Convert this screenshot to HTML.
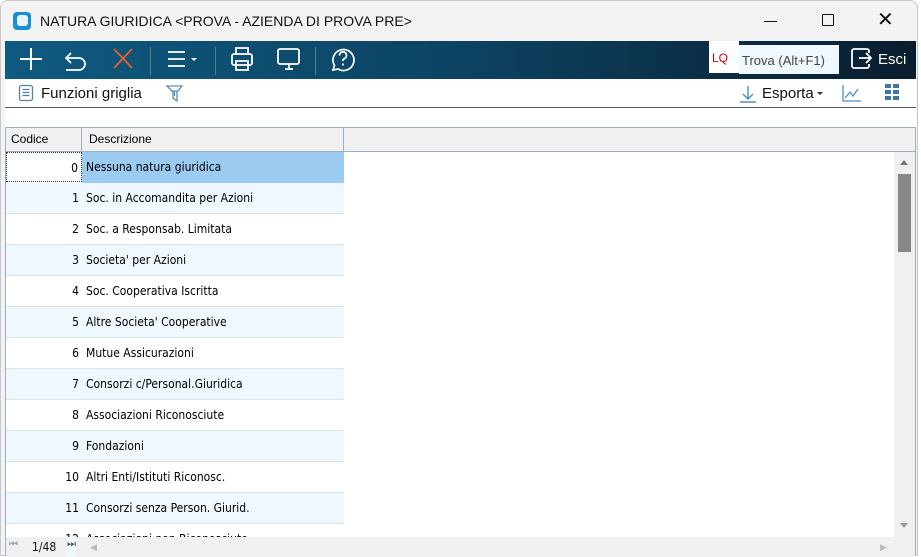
<!DOCTYPE html>
<html><head><meta charset="utf-8"><style>
*{box-sizing:border-box;margin:0;padding:0}
body{width:921px;height:556px;overflow:hidden;background:#fff;font-family:"Liberation Sans",sans-serif;position:relative}
.abs{position:absolute}
.win{left:0;top:0;width:918px;height:556px;border:1px solid #c8c8c8;border-radius:8px 8px 0 0;background:#f3f3f3;overflow:hidden}
.tb{left:5px;top:41px;width:911px;height:38px;background:linear-gradient(90deg,#0f5a80 0%,#0c4363 50%,#0a1d2e 100%)}
.sep{top:47px;width:1px;height:28px;background:#4f7f99}
.t2{left:5px;top:79px;width:911px;height:29px;background:#fff;border-bottom:1px solid #555}
.grid{left:5px;top:127px;width:911px;height:429px;background:#fff;border:1px solid #9bb0c4;border-bottom:none}
.hdr{left:0;top:0;width:909px;height:24px;background:#f1f1f1;border-bottom:1px solid #9bb0c4;font-size:12px}
.row{position:absolute;left:0;width:338px;height:31px;border-bottom:1px solid #d8e4ef;font-size:12px;font-family:"DejaVu Sans Condensed","Liberation Sans",sans-serif}
.row .c{position:absolute;left:0;width:76px;height:30px;text-align:right;padding-right:3px;line-height:30px}
.row .d{position:absolute;left:76px;width:262px;height:30px;padding-left:4px;line-height:30px}
</style></head><body>
<div class="abs win">
 <div class="abs" style="left:12px;top:11px;width:18px;height:18px;border-radius:4px;background:#1a8fd6"></div>
 <div class="abs" style="left:16px;top:14px;width:11px;height:11px;border-radius:3px;background:#e8f4ff"></div>
 <div class="abs" style="left:39px;top:12px;font-size:14px;color:#111">NATURA GIURIDICA &lt;PROVA - AZIENDA DI PROVA PRE&gt;</div>
 <div class="abs" style="left:763px;top:20px;width:13px;height:1px;background:#111"></div>
 <div class="abs" style="left:821px;top:13px;width:12px;height:12px;border:1px solid #111;border-radius:1px"></div>
 <div class="abs" style="left:876px;top:6px;font-size:20px;color:#111">✕</div>
</div>
<div class="abs tb">
 <svg class="abs" style="left:0;top:0" width="360" height="38" fill="none" stroke-width="2">
  <path d="M26 7v22M15 18h22" stroke="#fff"/>
  <path d="M66 12l-5 5 5 5M61 17h13a6 6 0 0 1 0 12h-13" stroke="#fff" stroke-width="1.7"/>
  <path d="M109 8l18 19M127 8l-18 19" stroke="#e0622e" stroke-width="1.8"/>
  <path d="M163 11h17M163 18h17M163 25h17" stroke="#fff" stroke-width="1.7"/>
  <path d="M186 17h6l-3 3z" fill="#fff" stroke="none"/>
  <rect x="227" y="13" width="20" height="11" rx="2" stroke="#fff" stroke-width="1.8"/>
  <path d="M231 13V7h12v6M231 20h12v9h-12z" stroke="#fff" stroke-width="1.8"/>
  <rect x="273" y="8" width="21" height="15" rx="2" stroke="#fff" stroke-width="1.8"/>
  <path d="M280 28h8M284 23v5" stroke="#fff" stroke-width="1.8"/>
  <path d="M328 29l1.5-4.5A10.5 10.5 0 1 1 333 28z" stroke="#fff" stroke-width="1.7"/>
  <path d="M334.5 14.5a3.5 3.5 0 1 1 5 3c-1.2.6-1.5 1.3-1.5 2.5" stroke="#fff" stroke-width="1.8"/>
  <circle cx="338" cy="23.5" r="1.1" fill="#fff" stroke="none"/>
 </svg>
 <div class="abs sep" style="left:145px;top:6px"></div>
 <div class="abs sep" style="left:210px;top:6px"></div>
 <div class="abs sep" style="left:310px;top:6px"></div>
 <div class="abs" style="left:704px;top:0;width:30px;height:32px;background:#fff;color:#c00;font-size:12px;padding:10px 0 0 3px">LQ</div>
 <div class="abs" style="left:734px;top:4px;width:100px;height:29px;background:#f0f8ff;color:#444;font-size:13px;padding:8px 0 0 3px">Trova (Alt+F1)</div>
 <svg class="abs" style="left:845px;top:6px" width="26" height="24" fill="none" stroke="#fff" stroke-width="1.8"><path d="M9 2H4a2 2 0 0 0-2 2v15a2 2 0 0 0 2 2h5M9 11h12M16 6l5 5-5 5"/><path d="M9 2h8a2 2 0 0 1 2 2v2M9 21h8a2 2 0 0 0 2-2v-2"/></svg>
 <div class="abs" style="left:873px;top:10px;color:#fff;font-size:15px">Esci</div>
</div>
<div class="abs t2">
 <svg class="abs" style="left:13px;top:5px" width="18" height="18" fill="none" stroke="#5a7fa8" stroke-width="1.3"><rect x="1.5" y="1.5" width="13" height="15" rx="2"/><path d="M4.5 5.5h7M4.5 8.5h7M4.5 11.5h7"/></svg>
 <div class="abs" style="left:36px;top:6px;font-size:15px;color:#111">Funzioni griglia</div>
 <svg class="abs" style="left:160px;top:4px" width="20" height="20" fill="none" stroke="#5a8fb0" stroke-width="1.3"><path d="M2 3h15l-5 6v9l-4-3V9z"/><path d="M7 8h5M9.5 8v5"/></svg>
 <svg class="abs" style="left:733px;top:5px" width="20" height="20" fill="none" stroke="#4a8fc8" stroke-width="1.4"><path d="M10 2v13M5 10l5 5 5-5M2 18h16"/></svg>
 <div class="abs" style="left:757px;top:6px;font-size:15px;color:#111">Esporta</div>
 <div class="abs" style="left:812px;top:13px;border-left:3px solid transparent;border-right:3px solid transparent;border-top:3px solid #333"></div>
 <svg class="abs" style="left:836px;top:4px" width="22" height="20" fill="none" stroke="#4a8fc8" stroke-width="1.3"><path d="M2 2v16h18M4 15l5-6 3 4 5-7"/></svg>
 <svg class="abs" style="left:880px;top:5px" width="16" height="16" fill="#3a78a8"><rect x="0" y="0" width="6" height="4"/><rect x="8" y="0" width="6" height="4"/><rect x="0" y="6" width="6" height="4"/><rect x="8" y="6" width="6" height="4"/><rect x="0" y="12" width="6" height="4"/><rect x="8" y="12" width="6" height="4"/></svg>
</div>
<div class="abs" style="left:5px;top:108px;width:911px;height:19px;background:#fff"></div>
<div class="abs grid">
 <div class="abs hdr">
  <div class="abs" style="left:0;top:0;width:76px;height:24px;border-right:1px solid #9bb0c4;padding:4px 0 0 5px">Codice</div>
  <div class="abs" style="left:76px;top:0;width:262px;height:24px;border-right:1px solid #9bb0c4;padding:4px 0 0 7px">Descrizione</div>
 </div>
 <div class="row" style="top:24px;border-bottom:none"><div class="c" style="border:1px dotted #333">0</div><div class="d" style="background:#9ccbf2;height:31px">Nessuna natura giuridica</div></div>
 <div class="row" style="top:55px;background:#f0f8ff"><div class="c">1</div><div class="d">Soc. in Accomandita per Azioni</div></div>
 <div class="row" style="top:86px"><div class="c">2</div><div class="d">Soc. a Responsab. Limitata</div></div>
 <div class="row" style="top:117px;background:#f0f8ff"><div class="c">3</div><div class="d">Societa' per Azioni</div></div>
 <div class="row" style="top:148px"><div class="c">4</div><div class="d">Soc. Cooperativa Iscritta</div></div>
 <div class="row" style="top:179px;background:#f0f8ff"><div class="c">5</div><div class="d">Altre Societa' Cooperative</div></div>
 <div class="row" style="top:210px"><div class="c">6</div><div class="d">Mutue Assicurazioni</div></div>
 <div class="row" style="top:241px;background:#f0f8ff"><div class="c">7</div><div class="d">Consorzi c/Personal.Giuridica</div></div>
 <div class="row" style="top:272px"><div class="c">8</div><div class="d">Associazioni Riconosciute</div></div>
 <div class="row" style="top:303px;background:#f0f8ff"><div class="c">9</div><div class="d">Fondazioni</div></div>
 <div class="row" style="top:334px"><div class="c">10</div><div class="d">Altri Enti/Istituti Riconosc.</div></div>
 <div class="row" style="top:365px;background:#f0f8ff"><div class="c">11</div><div class="d">Consorzi senza Person. Giurid.</div></div>
 <div class="row" style="top:396px"><div class="c">12</div><div class="d">Associazioni non Riconosciute</div></div>
 <div class="abs" style="left:888px;top:24px;width:21px;height:385px;background:#f0f0f0"></div>
 <div class="abs" style="left:894px;top:32px;border-left:4px solid transparent;border-right:4px solid transparent;border-bottom:5px solid #777"></div>
 <div class="abs" style="left:892px;top:46px;width:13px;height:78px;background:#888"></div>
 <div class="abs" style="left:894px;top:395px;border-left:4px solid transparent;border-right:4px solid transparent;border-top:5px solid #999"></div>
 <div class="abs" style="left:0;top:409px;width:909px;height:20px;background:#f0f0f0"></div>
 <div class="abs" style="left:3px;top:411px;font-size:10px;color:#999">⏮</div>
 <div class="abs" style="left:26px;top:412px;font-size:12px;color:#111;font-family:'DejaVu Sans Condensed',sans-serif">1/48</div>
 <div class="abs" style="left:60px;top:409px;width:10px;height:20px;background:#f0f8ff"></div>
 <div class="abs" style="left:61px;top:411px;font-size:10px;color:#555">⏭</div>
 <div class="abs" style="left:84px;top:414px;font-size:9px;color:#bbb">◀</div>
 <div class="abs" style="left:874px;top:414px;font-size:9px;color:#bbb">▶</div>
</div>
</body></html>
